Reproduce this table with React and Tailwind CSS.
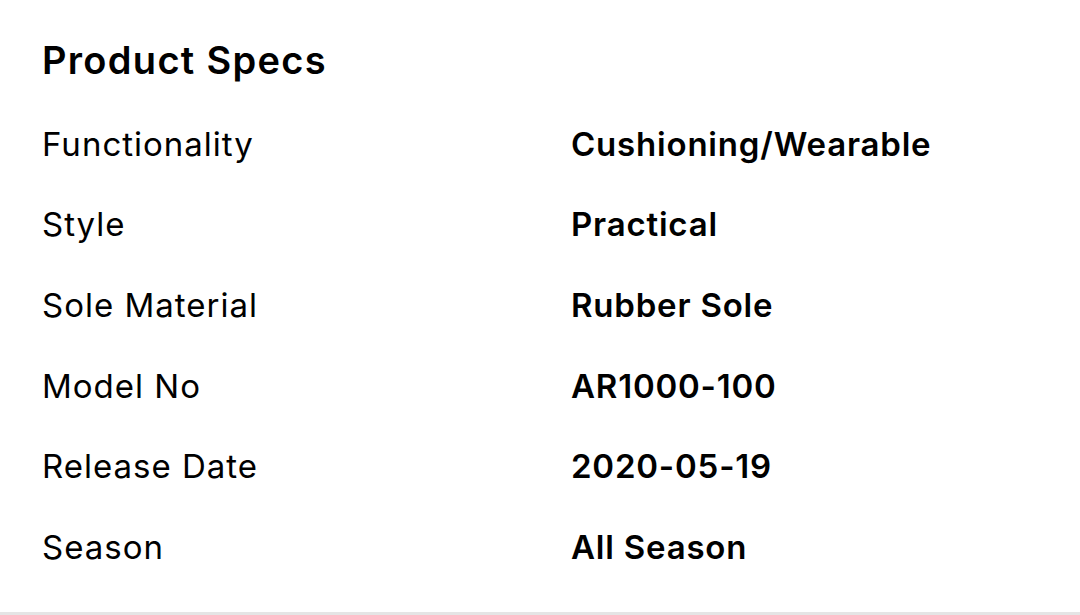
import React from "react";

const specs = [
  ["Functionality", "Cushioning/Wearable"],
  ["Style", "Practical"],
  ["Sole Material", "Rubber Sole"],
  ["Model No", "AR1000-100"],
  ["Release Date", "2020-05-19"],
  ["Season", "All Season"],
];

export default function App() {
  return (
    <div className="w-[1080px] h-[615px] bg-white font-['Inter',sans-serif] text-black border-b-[3px] border-[#e5e5e5] box-border">
      <div className="px-[42px] pt-[36px]">
        <h2 className="text-[38px] leading-[48px] font-semibold tracking-[1.3px]">Product Specs</h2>
        <div className="mt-[20px] flex flex-col">
          {specs.map(([label, value]) => (
            <div key={label} className="grid grid-cols-[529px_1fr] h-[80.6px] items-center">
              <span className="text-[33px] leading-none tracking-[1px]">{label}</span>
              <span className="text-[33px] leading-none font-semibold tracking-[0.8px]">{value}</span>
            </div>
          ))}
        </div>
      </div>
    </div>
  );
}
